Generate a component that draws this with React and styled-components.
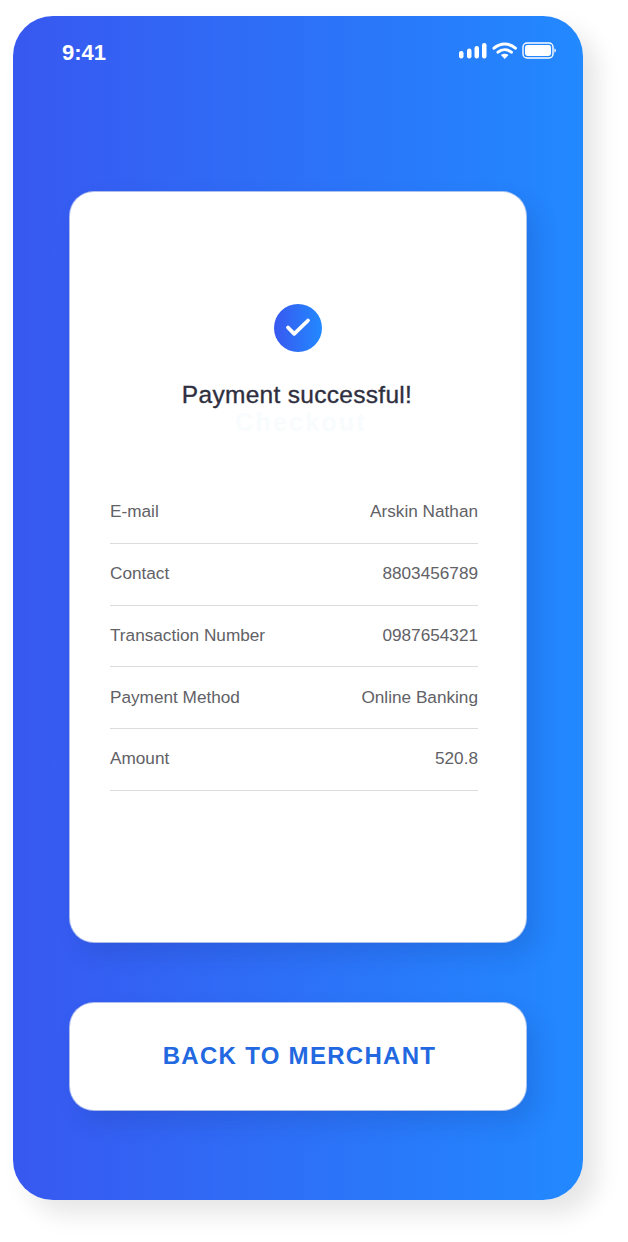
import styled, { createGlobalStyle } from 'styled-components';

const GlobalStyle = createGlobalStyle`
  html, body {
    margin: 0;
    padding: 0;
    background: #fff;
    font-family: "Liberation Sans", Arial, sans-serif;
  }
`;

const Page = styled.div`
  width: 628px;
  height: 1242px;
  padding: 16px 0 0 13px;
  box-sizing: border-box;
  overflow: hidden;
`;

const Phone = styled.main`
  width: 570px;
  height: 1184px;
  border-radius: 40px;
  background: linear-gradient(90deg, #3858f0 0%, #2289ff 100%);
  box-shadow: 14px 14px 24px rgba(0, 0, 0, 0.1);
  display: flex;
  flex-direction: column;
  align-items: center;
`;

const StatusBar = styled.header`
  width: 100%;
  height: 176px;
  flex: none;
  box-sizing: border-box;
  padding: 24px 26px 0 49px;
  display: flex;
  justify-content: space-between;
  align-items: flex-start;
`;

const Time = styled.span`
  color: #fff;
  font-size: 22px;
  line-height: 25px;
  font-weight: 700;
`;

const StatusIcons = styled.svg`
  width: 98px;
  height: 20px;
  margin-top: 1px;
`;

const Card = styled.section`
  width: 456px;
  height: 750px;
  flex: none;
  box-sizing: border-box;
  background: #fff;
  border-radius: 24px;
  box-shadow: 0 0 0 1px rgba(215, 220, 235, 0.75), 10px 12px 24px rgba(20, 40, 110, 0.16);
  padding: 112px 48px 0 40px;
  display: flex;
  flex-direction: column;
`;

const SuccessHead = styled.div`
  display: flex;
  flex-direction: column;
  align-items: center;
  margin-left: -4px;
  margin-right: -4px;
`;

const CheckBadge = styled.div`
  width: 48px;
  height: 48px;
  border-radius: 50%;
  margin-left: 8px;
  background: linear-gradient(90deg, #3858f0 0%, #2289ff 100%);
  display: flex;
  align-items: center;
  justify-content: center;
`;

const Title = styled.h1`
  margin: 28px 0 0;
  margin-left: 6px;
  color: #2f2f3f;
  font-size: 24.5px;
  line-height: 30px;
  font-weight: 400;
  letter-spacing: 0.3px;
  -webkit-text-stroke: 0.35px #2f2f3f;
  white-space: nowrap;
`;

const GhostTitle = styled.div`
  color: #f9fcfd;
  font-size: 25px;
  line-height: 24px;
  font-weight: 700;
  letter-spacing: 2.2px;
  margin-left: 14px;
`;

const Rows = styled.dl`
  margin: 48px 0 0;
  width: 368px;
`;

const Row = styled.div`
  height: 61.75px;
  box-sizing: border-box;
  border-bottom: 1px solid #dcdcdc;
  padding-bottom: 1px;
  display: flex;
  justify-content: space-between;
  align-items: center;
  color: #616166;
  font-size: 17.2px;
`;

const Term = styled.dt`
  margin: 0;
`;

const Value = styled.dd`
  margin: 0;
`;

const BackButton = styled.button`
  width: 456px;
  height: 107px;
  flex: none;
  margin-top: 61px;
  border: none;
  border-radius: 24px;
  background: #fff;
  box-shadow: 0 0 0 1px rgba(215, 220, 235, 0.75), 10px 12px 24px rgba(20, 40, 110, 0.16);
  color: #2268e0;
  font-family: "Liberation Sans", Arial, sans-serif;
  font-size: 24px;
  font-weight: 700;
  letter-spacing: 1.3px;
  padding: 0 0 1px 3px;
`;

const details = [
  ['E-mail', 'Arskin Nathan'],
  ['Contact', '8803456789'],
  ['Transaction Number', '0987654321'],
  ['Payment Method', 'Online Banking'],
  ['Amount', '520.8'],
];

export default function App() {
  return (
    <Page>
      <GlobalStyle />
      <Phone>
        <StatusBar>
          <Time>9:41</Time>
          <StatusIcons viewBox="0 0 98 20" fill="none">
            <rect x="0" y="10" width="4.5" height="7.5" rx="2.2" fill="#fff" />
            <rect x="8" y="7.5" width="4.5" height="10" rx="2.2" fill="#fff" />
            <rect x="15.5" y="5" width="4.5" height="12.5" rx="2.2" fill="#fff" />
            <rect x="23" y="2" width="4.5" height="15.5" rx="2.2" fill="#fff" />
            <path d="M35 7.2c6.4-5.6 15-5.6 21.4 0" stroke="#fff" strokeWidth="3" strokeLinecap="round" />
            <path d="M39 11.2c4-3.3 9.4-3.3 13.4 0" stroke="#fff" strokeWidth="3" strokeLinecap="round" />
            <path d="M41.9 14 45.7 18 49.5 14c-2.2-1.7-5.4-1.7-7.6 0Z" fill="#fff" />
            <rect x="64" y="2" width="30" height="15" rx="4" stroke="#fff" strokeWidth="1.4" />
            <rect x="66" y="4" width="26" height="11" rx="2.4" fill="#fff" />
            <path d="M95.4 7.5c1 .4 1.4 1.1 1.4 2s-.4 1.6-1.4 2Z" fill="#fff" />
          </StatusIcons>
        </StatusBar>

        <Card>
          <SuccessHead>
            <CheckBadge>
              <svg width="28" height="24" viewBox="0 0 28 24" fill="none">
                <path d="M4 11.5 10.2 17.8 24 4.5" stroke="#fff" strokeWidth="3.8" strokeLinecap="round" strokeLinejoin="round" />
              </svg>
            </CheckBadge>
            <Title>Payment successful!</Title>
            <GhostTitle>Checkout</GhostTitle>
          </SuccessHead>

          <Rows>
            {details.map(([label, value]) => (
              <Row key={label}>
                <Term>{label}</Term>
                <Value>{value}</Value>
              </Row>
            ))}
          </Rows>
        </Card>

        <BackButton>BACK TO MERCHANT</BackButton>
      </Phone>
    </Page>
  );
}
